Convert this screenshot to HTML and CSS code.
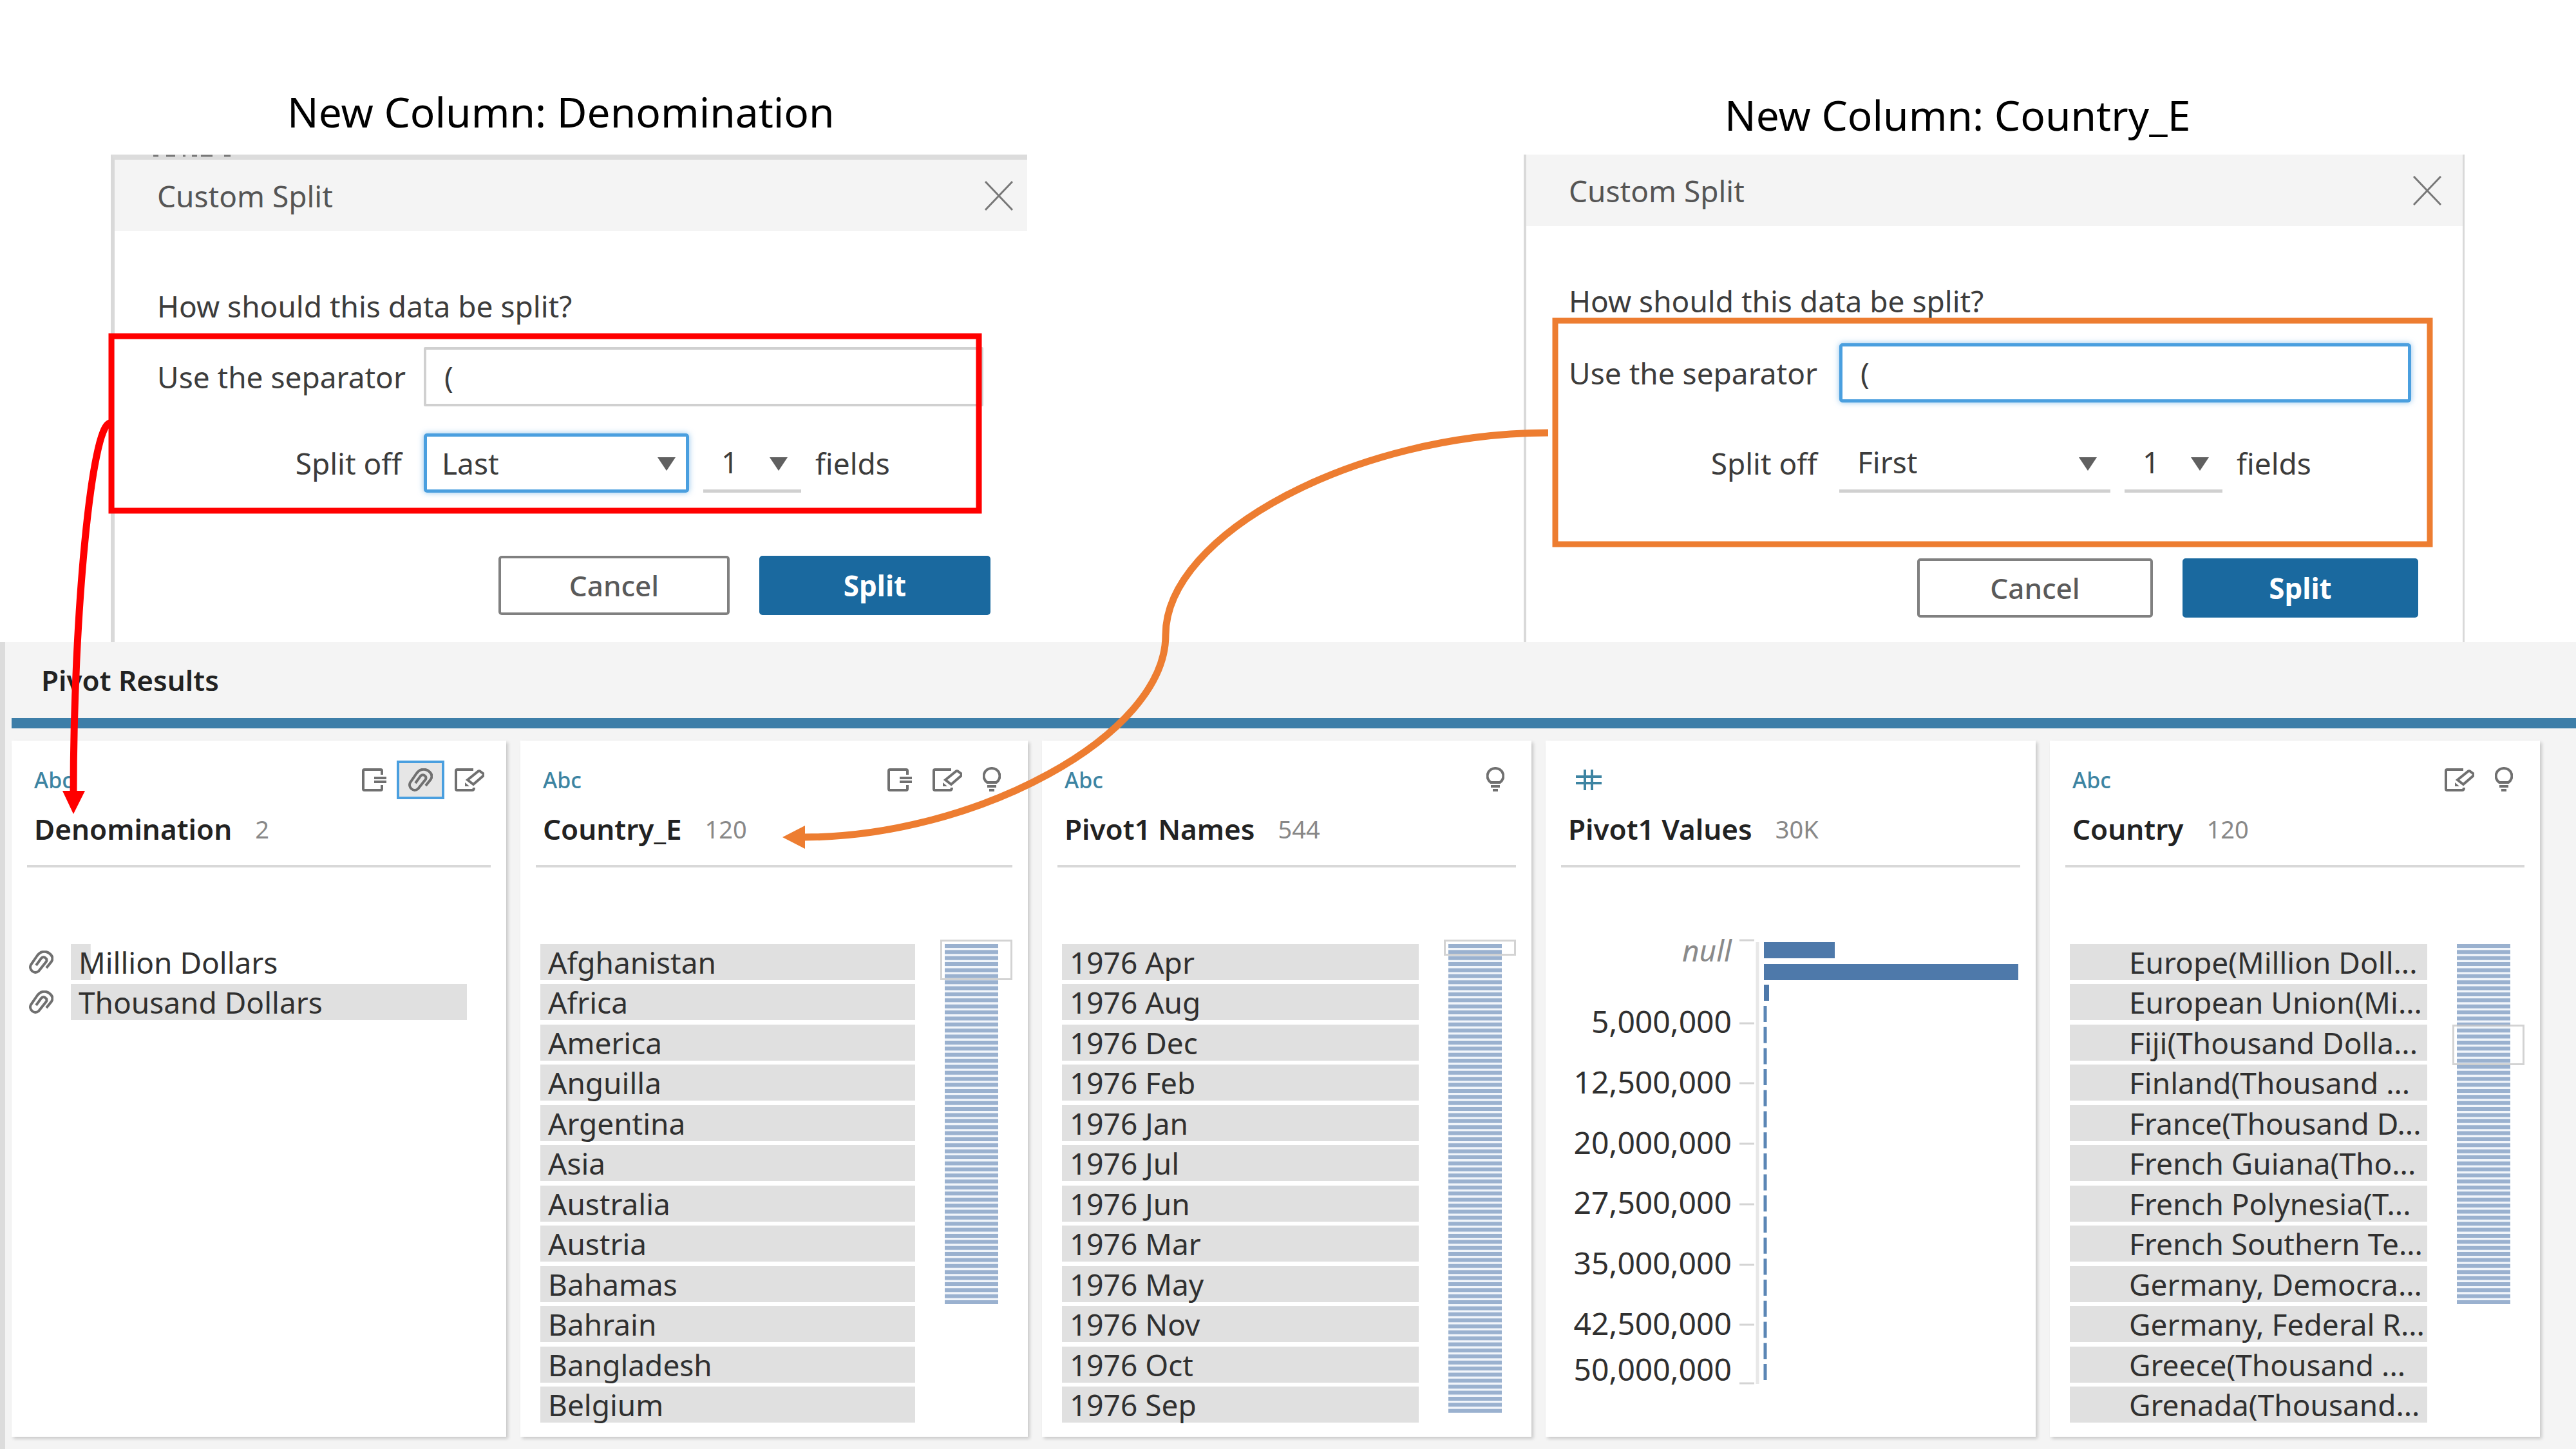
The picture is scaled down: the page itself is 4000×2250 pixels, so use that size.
FILE: index.html
```html
<!DOCTYPE html>
<html lang="en">
<head>
<meta charset="utf-8">
<meta name="viewport" content="width=device-width, initial-scale=1">
<title>Pivot Results - Custom Split</title>
<link rel="stylesheet" href="styles.css">
</head>
<body>
<svg class="symbols" aria-hidden="true">
  <symbol id="i-fields" viewBox="0 0 38 36"><path d="M31 10V4Q31 2 29 2H4Q2 2 2 4V32Q2 34 4 34H29Q31 34 31 32V26M19 15H38M19 21H38"/></symbol>
  <symbol id="i-clip" viewBox="0 0 38 36"><path d="M27 27L35 17C40 9 30 0 21 2C17 3 14 6 12 9L3 22C-1 29 8 38 15 32L27 17C29 12 23 8 19 12L11 23"/></symbol>
  <symbol id="i-edit" viewBox="0 0 46 36"><path d="M29 2H4Q2 2 2 4V32Q2 34 4 34H27Q30 34 30 30M20 18L36 5Q38 3 40 5L44 8Q46 10 44 12L29 25Z"/><path class="solid" d="M16 22L23 28L16 28Z"/></symbol>
  <symbol id="i-bulb" viewBox="0 0 28 40"><path d="M14 2A12 12 0 0 1 21 24H7A12 12 0 0 1 14 2ZM7 30H21M10 36H18"/></symbol>
</svg>
<main class="page">
  <section class="dialogs">
    <figure class="shot shot-denomination">
      <figcaption class="shot-title">New Column: Denomination</figcaption>
      <form class="dialog">
        <header class="dialog-head">
          <h2 class="dialog-title">Custom Split</h2>
          <button class="close" type="button" aria-label="Close"><svg viewBox="0 0 44 46" width="44" height="46"><path d="M1 1L43 45M43 1L1 45"/></svg></button>
        </header>
        <div class="dialog-body">
          <p class="question">How should this data be split?</p>
          <div class="field">
            <label class="label" for="sep1">Use the separator</label>
            <input class="input" id="sep1" type="text" value="(">
          </div>
          <div class="field">
            <label class="label" for="side1">Split off</label>
            <span class="picker picker-side focused"><select id="side1"><option>Last</option><option>First</option></select></span>
            <span class="picker picker-count"><select id="count1"><option>1</option><option>2</option></select></span>
            <label for="count1">fields</label>
          </div>
          <div class="actions">
            <button class="btn" type="button">Cancel</button>
            <button class="btn btn-primary" type="button">Split</button>
          </div>
        </div>
      </form>
    </figure>
    <figure class="shot shot-country">
      <figcaption class="shot-title">New Column: Country_E</figcaption>
      <form class="dialog">
        <header class="dialog-head">
          <h2 class="dialog-title">Custom Split</h2>
          <button class="close" type="button" aria-label="Close"><svg viewBox="0 0 44 46" width="44" height="46"><path d="M1 1L43 45M43 1L1 45"/></svg></button>
        </header>
        <div class="dialog-body">
          <p class="question">How should this data be split?</p>
          <div class="field">
            <label class="label" for="sep2">Use the separator</label>
            <input class="input focused" id="sep2" type="text" value="(">
          </div>
          <div class="field">
            <label class="label" for="side2">Split off</label>
            <span class="picker picker-side"><select id="side2"><option>First</option><option>Last</option></select></span>
            <span class="picker picker-count"><select id="count2"><option>1</option><option>2</option></select></span>
            <label for="count2">fields</label>
          </div>
          <div class="actions">
            <button class="btn" type="button">Cancel</button>
            <button class="btn btn-primary" type="button">Split</button>
          </div>
        </div>
      </form>
    </figure>
  </section>

  <section class="results">
    <h1 class="results-title">Pivot Results</h1>
    <div class="cards">
      <article class="card">
        <div class="card-type"><span>Abc</span>
          <div class="tools tools-tight">
            <svg class="icon" width="38" height="36"><use href="#i-fields"/></svg>
            <button class="tool-on" type="button" aria-label="Grouped values"><svg class="icon" width="38" height="36"><use href="#i-clip"/></svg></button>
            <svg class="icon" width="46" height="36"><use href="#i-edit"/></svg>
          </div>
        </div>
        <h2 class="card-name">Denomination <span class="count">2</span></h2>
        <div class="card-body grouped">
          <ul class="values">
            <li><svg class="icon" width="38" height="36"><use href="#i-clip"/></svg><span class="bar" style="--share:5%">Million Dollars</span></li>
            <li><svg class="icon" width="38" height="36"><use href="#i-clip"/></svg><span class="bar" style="--share:100%">Thousand Dollars</span></li>
          </ul>
        </div>
      </article>

      <article class="card">
        <div class="card-type"><span>Abc</span>
          <div class="tools">
            <svg class="icon" width="38" height="36"><use href="#i-fields"/></svg>
            <svg class="icon" width="46" height="36"><use href="#i-edit"/></svg>
            <svg class="icon" width="28" height="40"><use href="#i-bulb"/></svg>
          </div>
        </div>
        <h2 class="card-name">Country_E <span class="count">120</span></h2>
        <div class="card-body">
          <ul class="values filled">
            <li>Afghanistan</li><li>Africa</li><li>America</li><li>Anguilla</li><li>Argentina</li><li>Asia</li>
            <li>Australia</li><li>Austria</li><li>Bahamas</li><li>Bahrain</li><li>Bangladesh</li><li>Belgium</li>
          </ul>
          <div class="minimap">
            <svg width="83" height="559"><path class="gap" d="M41 0V559"/><path class="stripes" d="M41 0V559"/></svg>
            <span class="view view-tall"></span>
          </div>
        </div>
      </article>

      <article class="card">
        <div class="card-type"><span>Abc</span>
          <div class="tools">
            <svg class="icon" width="28" height="40"><use href="#i-bulb"/></svg>
          </div>
        </div>
        <h2 class="card-name">Pivot1 Names <span class="count">544</span></h2>
        <div class="card-body">
          <ul class="values filled">
            <li>1976 Apr</li><li>1976 Aug</li><li>1976 Dec</li><li>1976 Feb</li><li>1976 Jan</li><li>1976 Jul</li>
            <li>1976 Jun</li><li>1976 Mar</li><li>1976 May</li><li>1976 Nov</li><li>1976 Oct</li><li>1976 Sep</li>
          </ul>
          <div class="minimap">
            <svg width="83" height="728"><path class="gap" d="M41 0V728"/><path class="stripes" d="M41 0V728"/></svg>
            <span class="view view-short"></span>
          </div>
        </div>
      </article>

      <article class="card">
        <div class="card-type"><svg class="hash" width="52" height="32" viewBox="0 0 52 32" role="img" aria-label="Number"><path d="M12 11H52M12 21H52M26 0V32M37 0V32"/></svg></div>
        <h2 class="card-name">Pivot1 Values <span class="count">30K</span></h2>
        <svg class="histogram" viewBox="0 0 761 743" role="img" aria-label="Distribution of Pivot1 Values">
          <g class="ticks">
            <path d="M301 -6H324M301 123H324M301 216H324M301 310H324M301 404H324M301 498H324M301 591H324M301 682H324"/>
            <path class="axis" d="M329 -3V683"/>
          </g>
          <g class="scale">
            <text class="null" x="289" y="27">null</text>
            <text x="289" y="138">5,000,000</text>
            <text x="289" y="232">12,500,000</text>
            <text x="289" y="326">20,000,000</text>
            <text x="289" y="419">27,500,000</text>
            <text x="289" y="513">35,000,000</text>
            <text x="289" y="607">42,500,000</text>
            <text x="289" y="678">50,000,000</text>
          </g>
          <path class="bars" d="M339 -3H449V22H339ZM339 31H734V56H339ZM339 63H347V88H339Z"/>
          <path class="slivers" d="M341 96V677"/>
        </svg>
      </article>

      <article class="card">
        <div class="card-type"><span>Abc</span>
          <div class="tools">
            <svg class="icon" width="46" height="36"><use href="#i-edit"/></svg>
            <svg class="icon" width="28" height="40"><use href="#i-bulb"/></svg>
          </div>
        </div>
        <h2 class="card-name">Country <span class="count">120</span></h2>
        <div class="card-body">
          <ul class="values filled indented">
            <li>Europe(Million Doll...</li><li>European Union(Mi...</li><li>Fiji(Thousand Dolla...</li><li>Finland(Thousand ...</li>
            <li>France(Thousand D...</li><li>French Guiana(Tho...</li><li>French Polynesia(T...</li><li>French Southern Te...</li>
            <li>Germany, Democra...</li><li>Germany, Federal R...</li><li>Greece(Thousand ...</li><li>Grenada(Thousand...</li>
          </ul>
          <div class="minimap">
            <svg width="83" height="559"><path class="gap" d="M41 0V559"/><path class="stripes" d="M41 0V559"/></svg>
            <span class="view view-tall view-scrolled"></span>
          </div>
        </div>
      </article>
    </div>
  </section>

  <svg class="callouts" viewBox="0 0 4000 2250" aria-hidden="true">
    <path class="flecks" d="M238 242H246M258 242H272M284 242H288M298 242H306M312 242H330M348 242H358"/>
    <g class="red">
      <rect x="173" y="522" width="1347" height="271"/>
      <path d="M171 657C142 657 114 960 114 1232"/>
      <path class="head" d="M97 1228H132L114 1264Z"/>
    </g>
    <g class="orange">
      <rect x="2415" y="498" width="1358" height="347"/>
      <path d="M2404 672C2107 672 1810 829 1810 986S1513 1300 1248 1300"/>
      <path class="head" d="M1250 1282V1318L1215 1300Z"/>
    </g>
  </svg>
</main>
</body>
</html>
```
FILE: styles.css
```css
* { box-sizing: border-box; }
body {
  margin: 0;
  background: #fff;
  color: #3c3c3c;
  font: 46px/60px "Noto Sans", "Open Sans", sans-serif;
}
h1, h2, p, ul, figure { margin: 0; padding: 0; }
button, input, select { font: inherit; color: inherit; }
.symbols { position: absolute; width: 0; height: 0; }
.page {
  position: relative;
  display: flex;
  flex-direction: column;
  min-height: 100vh;
}

/* Dialogs */
.dialogs {
  display: grid;
  grid-template-columns: 1423fr 1461fr;
  column-gap: 771px;
  padding: 0 173px 0 172px;
}
.shot { display: flex; flex-direction: column; }
.shot-denomination {
  --title-inset: 274px; --title-top: 134px; --inset: 66px; --label: 380px; --right: 68px;
  --question-gap: 34px; --row-gap: 42px; --side: 412px; --btn: 359px; --actions-gap: 98px; --close-right: 22px;
}
.shot-country {
  --title-inset: 312px; --title-top: 139px; --inset: 66px; --label: 386px; --right: 80px;
  --question-gap: 36px; --row-gap: 48px; --side: 421px; --btn: 366px; --actions-gap: 102px; --close-right: 33px;
}
.shot-title {
  height: 240px;
  padding: var(--title-top) 0 0 var(--title-inset);
  color: #000;
  font-size: 64px;
  line-height: 80px;
  white-space: nowrap;
}
.dialog { flex: 1; border-left: 4px solid #d9d9d9; }
.shot-denomination .dialog { border-top: 8px solid #dcdcdc; border-left-width: 6px; }
.shot-country .dialog { border-right: 3px solid #d9d9d9; }
.dialog-head {
  display: flex;
  align-items: center;
  justify-content: space-between;
  height: 111px;
  padding: 0 var(--close-right) 0 var(--inset);
  background: #f4f4f4;
}
.dialog-title { color: #555; font-size: 46px; font-weight: 400; }
.close { display: flex; padding: 0; border: 0; background: none; }
.close path { fill: none; stroke: #777; stroke-width: 3; }
.dialog-body {
  display: flex;
  flex-direction: column;
  padding: 86px var(--right) 38px var(--inset);
}
.question { margin-bottom: var(--question-gap); }
.field {
  display: flex;
  align-items: center;
  gap: 22px;
  margin-bottom: var(--row-gap);
}
.label { width: var(--label); margin-right: 12px; text-align: right; white-space: nowrap; }
.input {
  flex: 1;
  min-width: 0;
  height: 92px;
  padding: 0 28px;
  border: 4px solid #d0d0d0;
  border-radius: 2px;
  background: #fff;
  outline: 0;
}
.picker { position: relative; height: 92px; border-bottom: 5px solid #d0d0d0; }
.picker-side { width: var(--side); }
.picker-count { width: 152px; }
.picker select {
  width: 100%;
  height: 100%;
  padding: 0 28px;
  border: 0;
  background: none;
  appearance: none;
  outline: 0;
}
.picker::after {
  content: "";
  position: absolute;
  top: 37px;
  right: 21px;
  width: 28px;
  height: 21px;
  background: #606060;
  clip-path: polygon(0 0, 100% 0, 50% 100%);
}
.focused { border: 5px solid #4a9fdf; border-radius: 5px; box-shadow: 0 0 10px #4a9fdf99; }
.picker.focused select { padding-left: 23px; }
.picker.focused::after { top: 32px; right: 16px; }
.actions {
  display: flex;
  justify-content: flex-end;
  gap: 46px;
  margin: calc(var(--actions-gap) - var(--row-gap)) -11px 0 0;
}
.btn {
  width: var(--btn);
  height: 92px;
  padding: 0;
  border: 4px solid #808080;
  border-radius: 5px;
  background: #fff;
  color: #5a5a5a;
  font-size: 44px;
  font-weight: 500;
}
.btn-primary { border-color: #1a699f; background: #1a699f; color: #fff; font-weight: 700; }

/* Results pane */
.results {
  flex: 1;
  display: flex;
  flex-direction: column;
  padding-left: 10px;
  border-left: 8px solid #dcdcdc;
  background: #f4f4f4;
}
.results-title {
  height: 134px;
  padding: 29px 46px;
  border-bottom: 16px solid #3d7ea8;
  color: #222;
  font-size: 44px;
  font-weight: 600;
}
.cards {
  flex: 1;
  display: grid;
  grid-template-columns: 768fr 788fr 760fr 761fr 761fr;
  gap: 22px;
  padding: 19px 56px 19px 0;
}
.card {
  display: flex;
  flex-direction: column;
  padding: 31px 0 22px;
  background: #fff;
  box-shadow: 3px 3px 5px #0000002e;
}
.card-type {
  display: flex;
  align-items: center;
  justify-content: space-between;
  height: 60px;
  padding: 0 42px 0 35px;
  color: #3d84a2;
  font-size: 34px;
  font-weight: 500;
}
.hash { fill: none; stroke: #3d84a2; stroke-width: 4; }
.tools { display: flex; align-items: center; gap: 32px; }
.tools-tight { margin-right: -8px; }
.tool-on {
  display: flex;
  align-items: center;
  justify-content: center;
  width: 74px;
  height: 60px;
  margin: 0 -16px;
  padding: 0;
  border: 4px solid #4a9fdf;
  background: #e6e6e6;
}
.icon { flex: none; fill: none; stroke: #707070; stroke-width: 4; }
.solid { fill: #707070; stroke: none; }
.card-name {
  display: flex;
  align-items: center;
  gap: 36px;
  height: 106px;
  margin: 0 24px;
  padding: 0 11px 10px;
  border-bottom: 4px solid #d8d8d8;
  color: #222;
  font-size: 44px;
  font-weight: 600;
}
.count { color: #888; font-size: 38px; font-weight: 400; }
.card-body {
  flex: 1;
  display: flex;
  gap: 39px;
  margin-top: 119px;
  padding: 0 24px 0 31px;
  color: #303030;
}
.values { list-style: none; flex: 1; display: flex; flex-direction: column; gap: 6px; }
.values li { height: 56px; line-height: 56px; white-space: nowrap; }
.filled { justify-content: space-between; gap: 0; }
.filled li { padding-left: 12px; background: #e0e0e0; }
.indented li { padding-left: 92px; }
.grouped { padding: 0 61px 0 27px; }
.grouped li { display: flex; align-items: center; gap: 27px; }
.bar {
  flex: 1;
  padding-left: 12px;
  background: linear-gradient(#e0e0e0, #e0e0e0) no-repeat 0 0 / var(--share) 100%;
}
.minimap { position: relative; width: 112px; padding-left: 7px; }
.minimap svg { display: block; }
.minimap path { fill: none; stroke-width: 84; }
.minimap .gap { stroke: #f1f5fa; }
.minimap .stripes { stroke: #9ab1cf; stroke-dasharray: 6 3.373; }
.view { position: absolute; top: -7px; left: 0; right: 0; border: 3px solid #c8c8c8cc; }
.view-tall { height: 63px; }
.view-short { height: 25px; }
.view-scrolled { top: 125px; }
.histogram { display: block; width: 100%; margin-top: 119px; overflow: visible; }
.ticks { fill: none; stroke: #d4d4d4; stroke-width: 3; }
.axis { stroke: #e8e8e8; stroke-width: 5; }
.scale { fill: #303030; font-size: 48px; text-anchor: end; }
.null { fill: #8a8a8a; font-size: 46px; font-style: italic; }
.bars { fill: #4e79aa; }
.slivers { stroke: #5b86b5; stroke-width: 5; stroke-dasharray: 25 7.7; }

/* Callout shapes drawn over the page */
.callouts {
  position: absolute;
  top: 0;
  left: 0;
  width: 100%;
  fill: none;
  pointer-events: none;
}
.red { stroke: #f00; stroke-width: 9; }
.orange { stroke: #ed7d31; stroke-width: 9; }
.red path, .orange path { stroke-width: 11; }
.red .head { fill: #f00; stroke: none; }
.orange .head { fill: #ed7d31; stroke: none; }
.flecks { stroke: #777; stroke-width: 3; }
```
